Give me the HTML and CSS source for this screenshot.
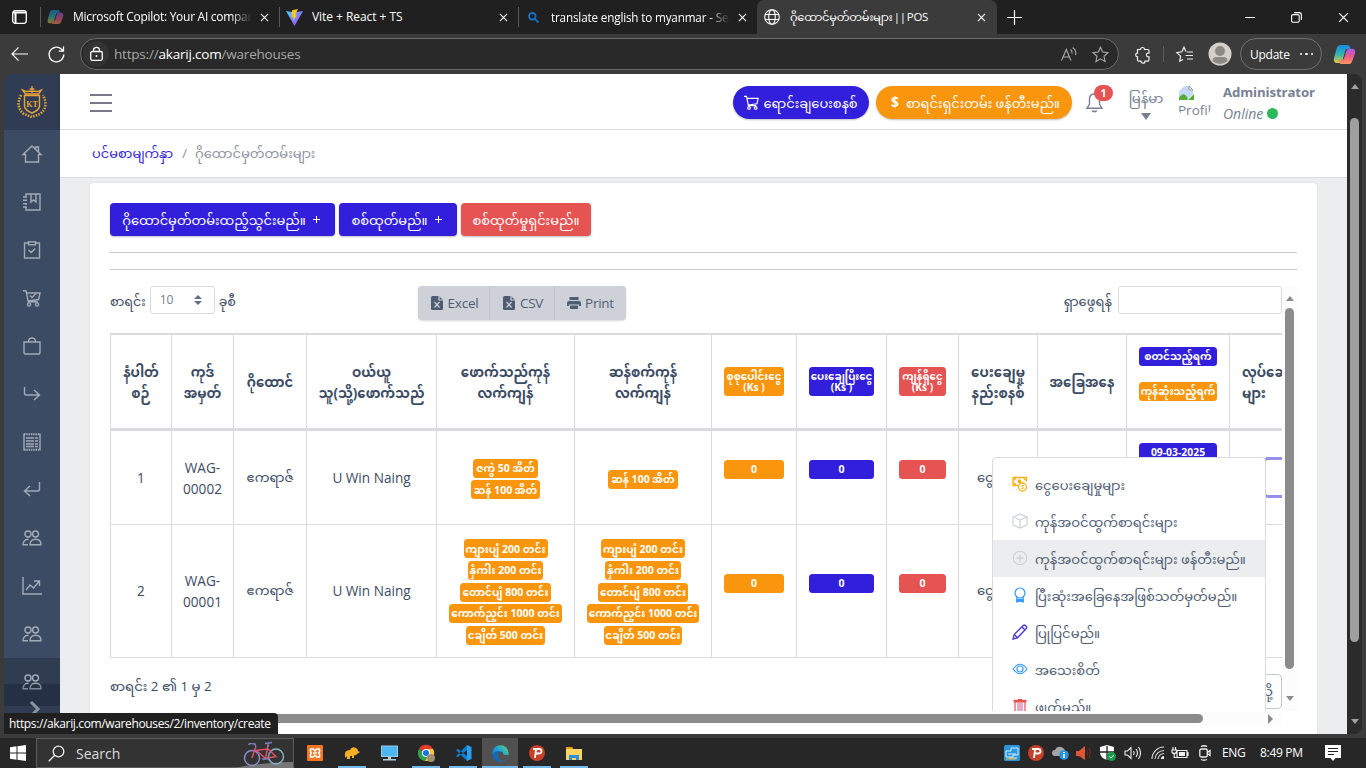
FILE: index.html
```html
<!DOCTYPE html>
<html lang="my">
<head>
<meta charset="utf-8">
<title>ဂိုထောင်မှတ်တမ်းများ || POS</title>
<link rel="stylesheet" href="styles.css">
</head>
<body>
<svg class="defs" aria-hidden="true">
  <defs>
    <linearGradient id="cpA" x1="0" y1="0" x2="0" y2="1"><stop offset="0" stop-color="#1b86e8"/><stop offset=".5" stop-color="#2bb6b0"/><stop offset="1" stop-color="#e8c83a"/></linearGradient>
    <linearGradient id="cpB" x1="0" y1="0" x2="0" y2="1"><stop offset="0" stop-color="#a05be8"/><stop offset=".5" stop-color="#f0578d"/><stop offset="1" stop-color="#fb9a5b"/></linearGradient>
    <linearGradient id="viteA" x1="0" y1="0" x2="1" y2="1"><stop offset="0" stop-color="#41d1ff"/><stop offset="1" stop-color="#bd34fe"/></linearGradient>
    <linearGradient id="edgeA" x1="0" y1="1" x2="1" y2="0"><stop offset="0" stop-color="#0c59a4"/><stop offset=".5" stop-color="#1b9de2"/><stop offset="1" stop-color="#5fd668"/></linearGradient>
  </defs>
  <symbol id="close" viewBox="0 0 10 10"><path d="M1 1l8 8M9 1L1 9" fill="none" stroke="currentColor" stroke-width="1.2"/></symbol>
  <symbol id="copilot" viewBox="0 0 24 22"><path d="M8 1h7q2 0 2.700 2l.6 2h-3q-2 0-2.600 2L10 17q-.8 3-3 3H4q-4 0-3-5L4 4q1-3 4-3z" fill="url(#cpA)"/><path d="M16 21H9q-2 0-2.500-2L6 17h3q2 0 2.600-2L14 7q.8-2 3-2h3q4 0 3 5l-3 8q-1 3-4 3z" fill="url(#cpB)"/></symbol>
  <symbol id="globe" viewBox="0 0 16 16"><g fill="none" stroke="currentColor" stroke-width="1.100"><circle cx="8" cy="8" r="7.300"/><ellipse cx="8" cy="8" rx="3.300" ry="7.300"/><path d="M1.300 5.500h13.400M1.300 10.500h13.400"/></g></symbol>
  <symbol id="people" viewBox="0 0 20 18"><g fill="none" stroke="currentColor" stroke-width="1.400"><circle cx="6" cy="5" r="3"/><circle cx="13.500" cy="5" r="3"/><path d="M6.500 10.200C3 10 1 12.500 1 15.800h5M8 15.800c0-3.500 2-5.600 5.500-5.600s5.500 2.100 5.500 5.600z"/></g></symbol>
  <symbol id="cart" viewBox="0 0 18 18"><g fill="none" stroke="currentColor" stroke-width="1.400"><path d="M0 1.700h3l2.300 11h9.500M3.500 4h13.500l-1.500 6.500L5 12"/><circle cx="6" cy="15.500" r="1.600"/><circle cx="14" cy="15.500" r="1.600"/></g></symbol>
  <symbol id="xls" viewBox="0 0 12 14"><path d="M1.500 0H8l4 4v8.500Q12 14 10.500 14h-9Q0 14 0 12.500v-11Q0 0 1.500 0z" fill="currentColor"/><path d="M3.500 6l5 5.500M8.500 6l-5 5.500M8 0v4h4" stroke="#ced2d8" stroke-width="1.200" fill="none"/></symbol>
</svg>

<header class="tabs">
  <div class="tab-menu"><svg width="15" height="14" viewBox="0 0 15 14"><rect x=".7" y=".7" width="13.600" height="12.600" rx="2.500" fill="none" stroke="#fff" stroke-width="1.300"/><path d="M1 2.500h13M3.500 3v10" stroke="#fff" stroke-width="2"/></svg></div>
  <div class="tab t1"><svg class="dim" width="17" height="16"><use href="#copilot"/></svg><span class="ttl fade">Microsoft Copilot: Your AI companion</span><svg class="x" width="9" height="9"><use href="#close"/></svg></div>
  <div class="tab t2"><svg width="17" height="17" viewBox="0 0 17 17"><path d="M0 2l8.500 15L17 2 8.500 3.500z" fill="url(#viteA)"/><path d="M12 0L6 1.200 5.500 8.500l2.200-.4L7 12l4-6-2 .3z" fill="#ffc51c"/></svg><span class="ttl">Vite + React + TS</span><svg class="x" width="9" height="9"><use href="#close"/></svg></div>
  <div class="tab t3"><svg width="11" height="11" viewBox="0 0 11 11"><g fill="none" stroke="#1672c9" stroke-width="1.800"><circle cx="4.300" cy="4.300" r="3.300"/><path d="M6.800 6.800L10.500 10.500"/></g></svg><span class="ttl fade">translate english to myanmar - Search</span><svg class="x" width="9" height="9"><use href="#close"/></svg></div>
  <div class="tab active"><svg width="16" height="16"><use href="#globe"/></svg><span class="ttl">ဂိုထောင်မှတ်တမ်းများ || POS</span><svg class="x" width="9" height="9"><use href="#close"/></svg></div>
  <svg class="plus" width="15" height="15" viewBox="0 0 15 15"><path d="M7.500 0v15M0 7.500h15" stroke="#fff" stroke-width="1.200"/></svg>
  <div class="winctl">
    <svg width="10" height="10" viewBox="0 0 10 10"><path d="M0 5.500h10" stroke="#fff"/></svg>
    <svg width="11" height="11" viewBox="0 0 11 11"><g fill="none" stroke="#fff" stroke-width="1.100"><rect x=".6" y="2.600" width="7.600" height="7.600" rx="1.500"/><path d="M3 .6h5q2.400 0 2.400 2.400v5"/></g></svg>
    <svg width="11" height="11"><use href="#close"/></svg>
  </div>
</header>

<nav class="toolbar">
  <svg class="back" width="17" height="14" viewBox="0 0 17 14"><path d="M7.500.5L1 7l6.500 6.500M1 7h16" fill="none" stroke="#fff" stroke-width="1.200"/></svg>
  <svg class="reload" width="17" height="17" viewBox="0 0 17 17"><path d="M15.800 8.500A7.400 7.400 0 1 1 13.300 3l1.700 2M15.500.5V5.200h-4.700" fill="none" stroke="#fff" stroke-width="1.300"/></svg>
  <div class="omni">
    <span class="lock"><svg width="13" height="14" viewBox="0 0 13 14"><g fill="none" stroke="#fff" stroke-width="1.300"><rect x=".7" y="4.500" width="11.600" height="8.800" rx="1.500"/><path d="M3.500 4.500V3.300a3 3 0 0 1 6 0v1.200"/></g><circle cx="6.500" cy="9" r="1" fill="#fff"/></svg></span>
    <span class="url">https://<b>akarij.com</b>/warehouses</span>
    <svg class="read" width="16" height="14" viewBox="0 0 16 14"><g fill="none" stroke="#aaa" stroke-width="1.100"><path d="M.5 13.500L5.300 2.500l4.700 11M2.200 10h6.200M9.500 2.500q2 1.500 1.500 4M11.700.5q4 3 2.800 7.500"/></g></svg>
    <svg width="17" height="17" viewBox="0 0 17 17"><path d="M8.500 1.200l2.200 4.900 5.300.6-4 3.600 1.100 5.300-4.600-2.700-4.600 2.700L5 10.300l-4-3.600 5.300-.6z" fill="none" stroke="#aaa" stroke-width="1.100"/></svg>
  </div>
  <svg class="ext" width="16" height="17" viewBox="0 0 16 17"><path d="M2.500 3.500h3a2 2 0 1 1 4 0h3.300q1.200 0 1.200 1.200v2.500h-.8a1.800 1.800 0 0 0 0 3.600h.8v3q0 1.400-1.200 1.400H10a2 2 0 0 1-4 0H3.700q-1.200 0-1.200-1.200v-3.200a1.800 1.800 0 0 1 0-3.600z" fill="none" stroke="#eee" stroke-width="1.200"/></svg>
  <i class="vsep"></i>
  <svg class="fav" width="17" height="16" viewBox="0 0 17 16"><path d="M10 5.800L8 1.200 5.900 5.800.9 6.600l3.700 3.500-.9 5L7 13.500M11 6h6M9.500 9.500H17M11 13h6" fill="none" stroke="#eee" stroke-width="1.200"/></svg>
  <svg class="avatar" width="24" height="24" viewBox="0 0 24 24"><circle cx="12" cy="12" r="11.500" fill="#d3d0cc"/><circle cx="12" cy="9" r="5" fill="#8c8985"/><path d="M4.500 19q0-4 4-4h7q4 0 4 4a11 11 0 0 1-15 0z" fill="#8c8985"/></svg>
  <div class="update">Update<span class="dots"><i></i><i></i><i></i></span></div>
  <svg class="cop" width="23" height="21"><use href="#copilot"/></svg>
</nav>

<div class="viewport">
  <aside class="side">
    <div class="brand"><svg width="30" height="34" viewBox="0 0 30 34"><g fill="none" stroke="#e8a33a"><path d="M7.500 10.500h15v11q-1 4-7.500 6.500-6.500-2.500-7.500-6.500z" stroke-width="1.400"/><path d="M15 1v7M12.500 4h5M5.500 5l3 4h13l3-4-4 1.500-5.500-.5-5.500.5z" stroke-width="1.300"/><path d="M4 10q-6 12 3 19l8 3 8-3q9-7 3-19" stroke-width="2.600" stroke-dasharray="1.500 1.300"/></g><text x="15" y="21.500" text-anchor="middle" class="kt">KT</text></svg></div>
    <div class="item"><svg width="20" height="18" viewBox="0 0 20 18"><path d="M1 9.500L10 1l9 8.500H16.500V17h-13V9.500zM13.500 4V2h3v5" fill="none" stroke="currentColor" stroke-width="1.400"/></svg></div>
    <div class="item"><svg width="18" height="18" viewBox="0 0 18 18"><g fill="none" stroke="currentColor" stroke-width="1.400"><path d="M3 4V1h14v16H3v-3M8 1v8l2.500-2L13 9V1M3 6.500v1.500M3 10.500V12M0 4h4M0 7.300h4M0 10.600h4M0 14h4"/></g></svg></div>
    <div class="item"><svg width="18" height="18" viewBox="0 0 18 18"><g fill="none" stroke="currentColor" stroke-width="1.400"><path d="M5 2H1.500v15h15V2H13M5.500 9l2.700 2.500 4-4"/><rect x="5.500" y=".8" width="7" height="3"/></g></svg></div>
    <div class="item"><svg width="18" height="18" viewBox="0 0 18 18"><use href="#cart"/><path d="M7 6.500l2 2 4-4" fill="none" stroke="currentColor" stroke-width="1.300"/></svg></div>
    <div class="item"><svg width="18" height="18" viewBox="0 0 18 18"><path d="M1 5h16v10.500q0 1.500-1.500 1.500h-13Q1 17 1 15.500zM5.500 5q0-4 3.500-4t3.500 4" fill="none" stroke="currentColor" stroke-width="1.400"/></svg></div>
    <div class="item"><svg width="18" height="18" viewBox="0 0 18 18"><path d="M1.500 2v6q0 2 2 2H16M11 5l5.500 5-5.500 5" fill="none" stroke="currentColor" stroke-width="1.400"/></svg></div>
    <div class="item"><svg width="18" height="18" viewBox="0 0 18 18"><g fill="none" stroke="currentColor"><path d="M1 .5V17.500M17 .5V17.500" stroke-width="1.400"/><path d="M1 1.300h16M1 16.700h16" stroke-width="2" stroke-dasharray="1.500 .8"/><path d="M3 5h8M3 8h8M3 11h8M3 13.500h8M12 5h3M12 8h3M12 11h3M12 13.500h3" stroke-width="1.700"/></g></svg></div>
    <div class="item"><svg width="18" height="18" viewBox="0 0 18 18"><path d="M16.500 1v7q0 2-2 2H2M7 5l-5.500 5L7 15" fill="none" stroke="currentColor" stroke-width="1.400"/></svg></div>
    <div class="item"><svg width="20" height="18"><use href="#people"/></svg></div>
    <div class="item"><svg width="20" height="18" viewBox="0 0 20 18"><path d="M1 0v17h19M4 13l4-5 3.500 3L17 4.500M12 4h5.500v5" fill="none" stroke="currentColor" stroke-width="1.400"/></svg></div>
    <div class="item"><svg width="20" height="18"><use href="#people"/></svg></div>
    <div class="item on"><svg width="20" height="18"><use href="#people"/></svg></div>
    <div class="minimizer"><svg width="12" height="16" viewBox="0 0 12 16"><path d="M2 1l7 7-7 7" fill="none" stroke="#8a93a2" stroke-width="3"/></svg></div>
  </aside>

  <main class="main">
    <div class="head">
      <div class="burger"><i></i><i></i><i></i></div>
      <div class="pill blue"><svg width="15" height="15"><use href="#cart"/></svg><span>ရောင်းချပေးစနစ်</span></div>
      <div class="pill orange"><b>$</b><span>စာရင်းရှင်းတမ်း ဖန်တီးမည်။</span></div>
      <div class="bell"><svg width="17" height="20" viewBox="0 0 17 20"><path d="M8.500 1C5 1 3.500 3.500 3.500 6v5L1 15.300h15L13.500 11V6c0-2.500-1.500-5-5-5z" fill="none" stroke="#768192" stroke-width="1.400"/><path d="M5.500 17.500h6q-.5 2-3 2t-3-2z" fill="#768192"/></svg><span class="count">1</span></div>
      <div class="lang"><span>မြန်မာ</span><i></i></div>
      <div class="broken"><svg width="17" height="16" viewBox="0 0 17 16"><path d="M1 1h10l4 4v4l-6 6H1z" fill="#c5d8f5"/><path d="M1 13q5-8 9 1l-1 1H1z" fill="#53ad32"/><path d="M16 9v6H10z" fill="#53ad32"/><path d="M11 1v4h4M11 1l4 4" stroke="#999" fill="#fff"/></svg><span>Profil</span></div>
      <div class="who"><b>Administrator</b><em>Online <i></i></em></div>
    </div>
    <div class="crumb"><a>ပင်မစာမျက်နှာ</a><span class="slash">/</span><span>ဂိုထောင်မှတ်တမ်းများ</span></div>

    <section class="card">
      <div class="actions">
        <div class="btn b1"><span>ဂိုထောင်မှတ်တမ်းထည့်သွင်းမည်။</span><i class="add"></i></div>
        <div class="btn b2"><span>စစ်ထုတ်မည်။</span><i class="add"></i></div>
        <div class="btn b3"><span>စစ်ထုတ်မှုရှင်းမည်။</span></div>
      </div>
      <hr><hr>
      <div class="scroller">
        <div class="pane">
          <div class="controls">
            <label class="len"><span>စာရင်း</span><span class="select">10<svg width="8" height="10" viewBox="0 0 8 10"><path d="M4 0l4 4H0zM4 10L0 6h8z" fill="#636f83"/></svg></span><span>ခုစီ</span></label>
            <div class="exports"><span class="e1"><svg width="12" height="14"><use href="#xls"/></svg>Excel</span><span class="e2"><svg width="12" height="14"><use href="#xls"/></svg>CSV</span><span class="e3"><svg width="14" height="12" viewBox="0 0 14 12"><path d="M2.500 0h9v4h-9zM0 6q0-2 2-2h10q2 0 2 2v3h-2V7.500H2V9H0zM3 8.500h8V12H3z" fill="currentColor"/><path d="M2.500 3.500h9" stroke="#ced2d8"/></svg>Print</span></div>
            <label class="find"><span>ရှာဖွေရန်</span><span class="input"></span></label>
          </div>
          <div class="grid">
            <div class="row th">
              <div><p>နံပါတ်</p><p>စဉ်</p></div>
              <div><p>ကုဒ်</p><p>အမှတ်</p></div>
              <div><p>ဂိုထောင်</p></div>
              <div><p>ဝယ်ယူ</p><p>သူ(သို့)ဖောက်သည်</p></div>
              <div><p>ဖောက်သည်ကုန်</p><p>လက်ကျန်</p></div>
              <div><p>ဆန်စက်ကုန်</p><p>လက်ကျန်</p></div>
              <div><span class="badge two"><s>စုစုပေါင်းငွေ</s><s>(Ks )</s></span></div>
              <div><span class="badge two blue"><s>ပေးချေပြီးငွေ</s><s>(Ks )</s></span></div>
              <div><span class="badge two red"><s>ကျန်ရှိငွေ</s><s>(Ks )</s></span></div>
              <div><p>ပေးချေမှု</p><p>နည်းစနစ်</p></div>
              <div><p>အခြေအနေ</p></div>
              <div class="dates"><span class="badge wide blue">စတင်သည့်ရက်</span><span class="badge wide">ကုန်ဆုံးသည့်ရက်</span></div>
              <div class="ops"><p>လုပ်ဆောင်ချက်</p><p>များ</p></div>
            </div>
            <div class="row r1">
              <div>1</div>
              <div><p>WAG-</p><p>00002</p></div>
              <div><p class="my">ဧကရာဇ်</p></div>
              <div>U Win Naing</div>
              <div class="stack"><span class="badge" style="width:65px">ဇကွဲ 50 အိတ်</span><span class="badge" style="width:69px">ဆန် 100 အိတ်</span></div>
              <div class="stack"><span class="badge" style="width:70px">ဆန် 100 အိတ်</span></div>
              <div class="num"><span class="badge">0</span></div>
              <div class="num"><span class="badge blue">0</span></div>
              <div class="num"><span class="badge red">0</span></div>
              <div class="pay"><p class="my">ငွေသား</p></div>
              <div></div>
              <div class="dates"><span class="badge wide blue">09-03-2025</span></div>
              <div class="ops"><span class="focus"></span></div>
            </div>
            <div class="row r2">
              <div>2</div>
              <div><p>WAG-</p><p>00001</p></div>
              <div><p class="my">ဧကရာဇ်</p></div>
              <div>U Win Naing</div>
              <div class="stack"><span class="badge" style="width:84px">ကျားပျံ 200 တင်း</span><span class="badge" style="width:75px">နှံကါး 200 တင်း</span><span class="badge" style="width:91px">တောင်ပျံ 800 တင်း</span><span class="badge" style="width:113px">ကောက်ညှင်း 1000 တင်း</span><span class="badge" style="width:79px">ငချိတ် 500 တင်း</span></div>
              <div class="stack"><span class="badge" style="width:84px">ကျားပျံ 200 တင်း</span><span class="badge" style="width:76px">နှံကါး 200 တင်း</span><span class="badge" style="width:90px">တောင်ပျံ 800 တင်း</span><span class="badge" style="width:112px">ကောက်ညှင်း 1000 တင်း</span><span class="badge" style="width:78px">ငချိတ် 500 တင်း</span></div>
              <div class="num"><span class="badge">0</span></div>
              <div class="num"><span class="badge blue">0</span></div>
              <div class="num"><span class="badge red">0</span></div>
              <div class="pay"><p class="my">ငွေသား</p></div>
              <div></div><div></div><div class="ops"></div>
            </div>
          </div>
          <div class="foot"><span>စာရင်း 2 ၏ 1 မှ 2</span><span class="pager">ရှေ့သို့</span></div>
          <div class="menu">
            <div><svg width="16" height="16" viewBox="0 0 16 16"><g fill="none" stroke="#f9b115" stroke-width="1.300"><path d="M6 9.500H1V1.500h13.500v4"/><path d="M1 4q2.500 0 2.500-2.500M14.500 4Q12 4 12 1.500M1 7q2.500 0 2.500 2.500"/><circle cx="7.500" cy="5.300" r="1.300" fill="#f9b115"/><circle cx="10.500" cy="11" r="4"/><path d="M12 9.500h-2q-1 1 .5 1.500t.5 1.500H9.300" stroke-width="1"/></g></svg><span>ငွေပေးချေမှုများ</span></div>
            <div><svg width="16" height="16" viewBox="0 0 16 16"><path d="M1 4l7-3 7 3v8l-7 3-7-3zM1 4l7 3 7-3M8 7v8" fill="none" stroke="#ced2d8" stroke-width="1.200"/></svg><span>ကုန်အဝင်ထွက်စာရင်းများ</span></div>
            <div class="hover"><svg width="16" height="16" viewBox="0 0 16 16"><g fill="none" stroke="#ced2d8"><circle cx="8" cy="8" r="6.700" stroke-width="1.100"/><path d="M8 4.500v7M4.500 8h7" stroke-width="1.500"/></g></svg><span>ကုန်အဝင်ထွက်စာရင်းများ ဖန်တီးမည်။</span></div>
            <div><svg width="16" height="16" viewBox="0 0 16 16"><g fill="none" stroke="#39f" stroke-width="1.200"><circle cx="8" cy="6" r="5"/><path d="M4.800 10v5.300M11.200 10v5.300"/><path d="M5 12.500h6V15l-3-1-3 1z" fill="#39f"/></g></svg><span>ပြီးဆုံးအခြေနေအဖြစ်သတ်မှတ်မည်။</span></div>
            <div><svg width="16" height="16" viewBox="0 0 16 16"><path d="M1 15l1.200-4.500L11.300 1.500q1-1 2 0l1 1q1 1 0 2L5.500 13.800zM2.200 10.500l3.300 3.300M10 3l3 3" fill="none" stroke="#4638d2" stroke-width="1.300"/></svg><span>ပြုပြင်မည်။</span></div>
            <div><svg width="16" height="16" viewBox="0 0 16 16"><g fill="none" stroke="#39f" stroke-width="1.200"><path d="M1 8q7-9.500 14 0-7 9.500-14 0z"/><circle cx="8" cy="8" r="3"/></g></svg><span>အသေးစိတ်</span></div>
            <div><svg width="16" height="16" viewBox="0 0 16 16"><g fill="none" stroke="#e55353" stroke-width="1.200"><path d="M3 4h10v11H3zM6 1.500h4"/><path d="M6 5v9M8 5v9M10 5v9" stroke="#dc6fa0"/><path d="M1.500 3h13" stroke-width="2.400"/></g></svg><span>ဖျက်မည်။</span></div>
          </div>
        </div>
        <div class="vbar"><i class="up"></i><b></b><i class="dn"></i></div>
        <div class="hbar"><b></b><i></i></div>
      </div>
    </section>
  </main>
  <div class="pagebar"><i class="up"></i><b></b><i class="dn"></i></div>
  <div class="status">https://akarij.com/warehouses/2/inventory/create</div>
</div>

<footer class="taskbar">
  <div class="win"><svg width="16" height="16" viewBox="0 0 16 16"><path d="M0 2.200L6.500 1.300V7.500H0zM7.500 1.200L16 0v7.500H7.500zM0 8.500h6.500v6.200L0 13.800zM7.500 8.500H16V16l-8.500-1.200z" fill="#fff"/></svg></div>
  <div class="search"><svg width="17" height="17" viewBox="0 0 17 17"><g fill="none" stroke="#eee" stroke-width="1.300"><circle cx="10.500" cy="6.500" r="5.300"/><path d="M6.700 10.300L.7 16.300"/></g></svg><span>Search</span>
    <svg class="bike" width="58" height="28" viewBox="0 0 58 28"><path d="M0 28q20-5 58-6v6z" fill="#777"/><g fill="none" stroke-width="1.400"><circle cx="17" cy="18" r="7.500" stroke="#8b8fd0"/><circle cx="41" cy="16.500" r="7.500" stroke="#8cb4c4"/><path d="M17 18l3.500-10.500M20 10.500l13-1.500 8 7.500-10.500 2L21 10M30.500 18.500L33 5" stroke="#e0526c"/><path d="M14 5q-1-2 6-1l1 3.500M30 3.500l7-1M33 7V3M27 19h7" stroke="#7b7fc4"/></g></svg></div>
  <div class="app"><svg width="16" height="16" viewBox="0 0 16 16"><rect width="16" height="16" rx="1" fill="#f37623"/><path d="M3.500 4h2.800L8 6l1.700-2h2.800v3l-1 1 1 1v3H9.700L8 10l-1.700 2H3.500V9l1-1-1-1zM6 8h4" fill="none" stroke="#fff" stroke-width="1.600" stroke-linejoin="round"/></svg></div>
  <div class="app run"><svg width="16" height="14" viewBox="0 0 16 14"><path d="M1 10q-1-6 5-6Q8 0 12 2q2 1 2 3l2 1-3 2q-1 2-3 1v3H8v-2H6v3H3v-3l-2 2z" fill="#fbb024"/></svg></div>
  <div class="app"><svg width="17" height="16" viewBox="0 0 17 16"><rect x=".5" y="1" width="16" height="10.500" fill="#4db7f5" stroke="#9cd"/><path d="M7 12h3v2H7zM2 14h13v1.500H2z" fill="#bcd"/></svg></div>
  <div class="app run"><svg width="17" height="17" viewBox="0 0 17 17"><path d="M1 4a8 8 0 0 1 14 0L8 8z" fill="#e33b2e"/><path d="M1 4a8 8 0 0 0 6 12l3-6z" fill="#2ba24c"/><path d="M15 4a8 8 0 0 1-8 12l4-8-2-4z" fill="#fcc934"/><circle cx="8" cy="8" r="4" fill="#fff"/><circle cx="8" cy="8" r="3" fill="#1a73e8"/><circle cx="13" cy="13" r="4" fill="#a09070"/></svg></div>
  <div class="app run"><svg width="17" height="16" viewBox="0 0 17 16"><path d="M12 0l4.500 2v12L12 16z" fill="#2a9ff0"/><path d="M12 0v5L2.700 12.200 1 11zM12 16v-5L2.700 3.800 1 5z" fill="#0d7fd0"/></svg></div>
  <div class="app run cur"><svg width="17" height="17" viewBox="0 0 17 17"><circle cx="8.500" cy="8.500" r="8.300" fill="url(#edgeA)"/><path d="M6 12q-1.500-5 3-5.500 2 0 2 2 0 1.500 2.500 1.500 3 0 3-1.500Q17 14 11 16q-4-1-5-4z" fill="#505050"/><path d="M1 9q3-4 7.500-2.500Q4 8 6 12q1 3 5 4Q2 18 .5 10z" fill="#1467b3"/></svg></div>
  <div class="app run"><svg width="16" height="16" viewBox="0 0 16 16"><circle cx="8" cy="8" r="8" fill="#c8402a"/><path d="M4 4h6q2.500 0 2.500 2.300T9.500 8.500H7M7 4.500L6 13" fill="none" stroke="#fff" stroke-width="1.800"/></svg></div>
  <div class="app run"><svg width="16" height="15" viewBox="0 0 16 15"><path d="M0 1h6l1 2h9v11H0z" fill="#fcd462"/><path d="M0 1h6l1 2H0z" fill="#e6a010"/><path d="M3 14V9h10v5h-3v-2H6v2z" fill="#2f8de0"/></svg></div>
  <div class="tray">
    <svg width="16" height="16" viewBox="0 0 16 16"><rect width="16" height="16" rx="1.500" fill="#2a94dc"/><path d="M2 6h5V3h7v7H9v2H2zM4 9h8M5 13h8" fill="none" stroke="#d5eefc"/><path d="M2 14h10" stroke="#f2b82e"/></svg>
    <svg class="i2" width="16" height="16" viewBox="0 0 16 16"><circle cx="8" cy="8" r="8" fill="#c8402a"/><path d="M4 4h6q2.500 0 2.500 2.300T9.500 8.500H7M7 4.500L6 13" fill="none" stroke="#fff" stroke-width="1.800"/></svg>
    <svg class="i3" width="17" height="14" viewBox="0 0 17 14"><path d="M3 10a3 3 0 0 1 0-6q2-4 6-3 4 1 4 5v4z" fill="#a5a5a5"/><circle cx="12" cy="9" r="4.800" fill="#2794df"/><path d="M12 8v4M12 6v1" stroke="#fff" stroke-width="1.500"/></svg>
    <svg class="i4" width="15" height="14" viewBox="0 0 15 14"><path d="M0 5h3l6-5v14L3 10H0z" fill="#dd5736"/><path d="M11 4q2 3 0 6M13 2q3 5 0 10" stroke="#6d2a1c" fill="none"/></svg>
    <svg class="i5" width="16" height="16" viewBox="0 0 16 16"><path d="M7 0l7 2v5q0 6-7 8-7-2-7-8V2z" fill="#fff"/><path d="M7 1v14M0 7h14" stroke="#222" stroke-width="1.300"/><circle cx="11.500" cy="11.500" r="4.500" fill="#169b48"/><path d="M9.500 11.500l1.500 1.500 3-3" stroke="#fff" fill="none"/></svg>
    <svg class="i6" width="17" height="14" viewBox="0 0 17 14"><path d="M1 5h2.500L7 1.500v11L3.500 9H1zM9.500 5q1.500 2 0 4M12 3q3 4 0 8M14.500 1q4 6 0 12" fill="none" stroke="#eee" stroke-width="1.100"/></svg>
    <svg class="i7" width="14" height="14" viewBox="0 0 14 14"><g fill="none" stroke="#ddd" stroke-width="1.100"><path d="M1 13A12 12 0 0 1 13 1M4 13a9 9 0 0 1 9-8.500M7 13a6 6 0 0 1 6-5.500"/></g><path d="M10 13a3 3 0 0 1 3-3v3z" fill="#eee"/></svg>
    <svg class="i8" width="17" height="12" viewBox="0 0 17 12"><path d="M5 3.500h10v7H5zM16 5v4M0 3h4.500v2.500q-2.200 2-4.500 0zM1 0v3M3.500 0v3M2.200 6v4.500H5" fill="none" stroke="#eee" stroke-width="1.200"/><path d="M7 5h6v4H7z" fill="#eee"/></svg>
    <svg class="i9" width="12" height="16" viewBox="0 0 12 16"><g fill="none" stroke="#eee" stroke-width="1.300"><rect x=".8" y="4" width="7.500" height="8" rx="1.500"/><path d="M8.300 7.500L11 5.500v5L8.300 8.500M2 1.500q3-1.500 6 0M2 14.500q3 1.500 6 0"/></g></svg>
    <span class="eng">ENG</span><span class="clock">8:49 PM</span>
    <svg class="note" width="16" height="16" viewBox="0 0 16 16"><path d="M0 0h16v13h-5.500L8 16l-2.500-3H0z" fill="#fff"/><path d="M3 3.500h10M3 6.500h10M3 9.500h6" stroke="#222"/></svg>
  </div>
</footer>
</body>
</html>
```
FILE: styles.css
```css
* { box-sizing: border-box; }
body { margin: 0; width: 1366px; height: 768px; overflow: hidden; display: flex; flex-direction: column; background: #3b3b3b; font-family: "Open Sans", "Noto Sans", "Noto Sans Myanmar", "Myanmar Text", Padauk, sans-serif; font-size: 13.100px; color: #3c4b64; }
.defs { position: absolute; width: 0; height: 0; }
svg { display: block; flex: none; overflow: visible; }
p { margin: 0; }
span, p, b { white-space: nowrap; }

.tabs { height: 34px; flex: none; background: #202020; display: flex; align-items: center; color: #fff; font-size: 12px; letter-spacing: -.2px; }
.tab-menu { width: 40px; padding-left: 12px; }
.tab { height: 34px; display: flex; align-items: center; }
.t1, .t2, .t3 { border-left: 1px solid #5a5a5a; height: 20px; width: 239px; padding-left: 6px; }
.t3 { padding-left: 9px; }
.ttl { margin-left: 9px; flex: 1; overflow: hidden; line-height: 30px; }
.fade { margin-right: 8px; -webkit-mask-image: linear-gradient(90deg, #000 88%, transparent); mask-image: linear-gradient(90deg, #000 88%, transparent); }
.t1 .ttl { letter-spacing: -.28px; }
.t2 .ttl { letter-spacing: -.05px; }
.t3 .ttl { margin-left: 12px; font-size: 11.700px; letter-spacing: -.16px; margin-top: -1px; }
.x { margin-right: 10px; }
.dim { opacity: .55; }
.active { width: 240px; padding-left: 7px; background: #3b3b3b; border-radius: 7px 7px 0 0; }
.active .ttl { font-size: 11.400px; letter-spacing: -.28px; word-spacing: -1.500px; margin-left: 10px; }
.active .x { margin-right: 11px; }
.plus { margin-left: 10px; }
.winctl { margin-left: auto; display: flex; align-items: center; gap: 36px; padding-right: 17px; }

.toolbar { height: 40px; flex: none; display: flex; align-items: center; }
.back { margin-left: 11px; }
.reload { margin-left: 20px; }
.omni { width: 1039px; height: 32px; margin-left: 15px; border: 1px solid #6b6b6b; border-radius: 16px; background: #292929; display: flex; align-items: center; padding: 0 9px 0 2px; }
.lock { width: 26px; height: 26px; border-radius: 13px; background: #333; display: flex; align-items: center; justify-content: center; }
.url { margin-left: 5px; flex: 1; color: #a8a8a8; font-size: 13.500px; letter-spacing: -.2px; }
.url b { font-weight: 400; color: #fff; }
.read { margin-right: 15px; }
.ext { margin-left: 16px; }
.vsep { width: 1px; height: 16px; background: #5a5a5a; margin: 0 12px; }
.avatar { margin-left: 15px; }
.update { width: 82px; height: 32px; margin-left: 8px; border: 1px solid #707070; border-radius: 16px; color: #fff; font-size: 12px; letter-spacing: -.25px; display: flex; align-items: center; padding-left: 9px; }
.dots { display: flex; gap: 3px; margin-left: 10px; }
.dots i { width: 2.500px; height: 2.500px; border-radius: 50%; background: #fff; }
.cop { margin-left: 11px; }

.viewport { height: 660px; flex: none; margin-left: 4px; width: 1358px; display: flex; position: relative; overflow: hidden; border-radius: 8px 8px 0 0; }
.side { width: 56px; flex: none; background: #3c4b64; color: #a3abb7; position: relative; }
.brand { height: 56px; background: #303c54; display: flex; align-items: center; justify-content: center; }
.kt { font: bold 8px "Liberation Serif", serif; fill: #e8a33a; }
.item { height: 48px; display: flex; align-items: center; justify-content: center; }
.on { background: #303c50; }
.minimizer { position: absolute; left: 0; right: 0; top: 610px; height: 50px; background: rgba(0, 0, 21, .2); display: flex; justify-content: center; padding: 17px 0 0 6px; }

.main { width: 1287px; flex: none; background: #ebedef; display: flex; flex-direction: column; }
.head { height: 56px; flex: none; background: #fff; border-bottom: 1px solid #d8dbe0; display: flex; align-items: center; padding-left: 30px; }
.burger { width: 22px; display: grid; gap: 6px; margin-right: 621px; padding-top: 3px; }
.burger i { height: 2px; background: #7a7888; }
.pill { height: 33px; border-radius: 17px; color: #fff; display: flex; align-items: center; justify-content: center; gap: 4px; box-shadow: 0 1px 2px rgba(0, 0, 21, .25); margin-top: 1px; line-height: 30px; font-size: 13px; }
.pill span { margin-top: 2px; }
.blue { background: #321fdb; }
.orange { background: #f9960d; }
.pill.blue { width: 136px; }
.pill.orange { width: 196px; margin-left: 7px; gap: 7px; padding-left: 3px; }
.pill b { font-size: 14px; }
.bell { margin: 2px 0 0 14px; width: 42px; position: relative; }
.count { position: absolute; left: 8px; top: -8px; width: 19px; height: 16px; border-radius: 8px; background: #e55353; color: #fff; font-size: 10.500px; font-weight: 700; line-height: 16px; text-align: center; }
.lang { width: 36px; display: flex; flex-direction: column; align-items: center; color: #768192; height: 40px; font-size: 13.300px; }
.lang span { line-height: 32px; margin-bottom: -1px; }
.lang i { border: 5.500px solid transparent; border-top: 7px solid #768192; border-bottom: 0; }
.broken { width: 33px; height: 33px; overflow: hidden; border-radius: 12px; margin-left: 14px; color: #768192; font-size: 13.500px; }
.broken span { display: block; line-height: 15px; margin-top: 2px; }
.who { margin-left: 12px; color: #768192; line-height: 21px; margin-top: 2px; }
.who b { display: block; font-size: 13.200px; letter-spacing: -.1px; }
.who em { display: flex; align-items: center; gap: 4px; font-size: 14px; }
.who i { width: 11px; height: 11px; border-radius: 6px; background: #2eb85c; }

.crumb { height: 48px; flex: none; background: #fff; border-bottom: 1px solid #d8dbe0; display: flex; align-items: center; padding: 0 0 1px 32px; line-height: 30px; color: #8a93a2; }
.crumb a { color: #321fdb; font-size: 12.950px; }
.slash { margin: 0 8px 0 9px; }

.card { margin: 5px 30px 0; flex: 1; background: #fff; border-radius: 4px 4px 0 0; padding: 20px 20px 0; min-height: 0; box-shadow: 0 0 3px rgba(0, 0, 21, .08); }
.actions { display: flex; gap: 4px; height: 33px; }
.btn { background: #321fdb; color: #fff; border-radius: 4px; display: flex; align-items: center; justify-content: center; gap: 7px; box-shadow: 0 1px 2px rgba(0, 0, 21, .25); line-height: 30px; font-size: 13.050px; }
.btn span { margin-top: 1px; }
.b1 { width: 225px; padding-right: 3px; } .b2 { width: 118px; padding-right: 3px; } .b3 { width: 130px; background: #e55353; }
.add { width: 7px; height: 7px; background: linear-gradient(#fff, #fff) center / 7px 1px no-repeat, linear-gradient(#fff, #fff) center / 1px 7px no-repeat; }
hr { border: 0; height: 1px; background: #c9c9c9; margin: 16px 0; }

.scroller { width: 1187px; display: grid; grid-template-columns: 1172px 15px; grid-template-rows: 425px 15px; margin-top: 16px; }
.pane { position: relative; overflow: hidden; height: 425px; }
.controls { height: 47px; display: flex; align-items: flex-start; }
.len { display: flex; align-items: center; height: 28px; width: 308px; gap: 4px; font-size: 12.700px; line-height: 30px; }
.len > span:not(.select) { margin-top: 2px; }
.select { width: 65px; height: 28px; border: 1px solid #d8dbe0; border-radius: 3px; display: flex; align-items: center; justify-content: space-between; padding: 0 12px 0 9px; color: #768192; font-size: 12px; }
.exports { width: 208px; height: 34px; background: #ced2d8; border-radius: 4px; display: flex; box-shadow: 0 1px 2px rgba(0, 0, 21, .15); color: #4f5d73; }
.exports span { display: flex; align-items: center; justify-content: center; gap: 5px; border-right: 1px solid #c0c5cd; font-size: 13.500px; letter-spacing: -.25px; padding-left: 2px; }
.e1 { width: 72px; } .e2 { width: 65px; } .exports .e3 { flex: 1; border: 0; gap: 4px; padding: 0; }
.find { margin-left: auto; display: flex; align-items: center; gap: 6px; height: 28px; line-height: 30px; }
.find span:first-child { margin-top: 2px; }
.input { width: 164px; height: 28px; border: 1px solid #d8dbe0; border-radius: 3px; }

.grid { width: 1240px; border-left: 1px solid #d8dbe0; }
.row { display: grid; grid-template-columns: 61px 62px 73px 130px 138px 137px 85px 90px 72px 79px 89px 103px 120px; border-bottom: 1px solid #d8dbe0; font-size: 13.600px; }
.row > div { border-right: 1px solid #d8dbe0; display: flex; flex-direction: column; align-items: center; justify-content: center; line-height: 21px; min-width: 0; }
.row .my { font-size: 13.100px; }
.row.th { height: 98px; border-top: 2px solid #d8dbe0; border-bottom: 3px solid #d8dbe0; font-weight: 700; font-size: 13.300px; }
.th p { position: relative; top: 1px; }
.r1 { height: 94px; }
.row.r2 { height: 133px; }
.row.r2 > div { padding-bottom: 1px; }
.badge { display: flex; align-items: center; justify-content: center; height: 19px; flex: none; border-radius: 3.500px; background: #f9960d; color: #fff; font-size: 10.500px; font-weight: 700; line-height: 10.500px; overflow: hidden; }
.badge.blue { background: #321fdb; } .badge.red { background: #e55353; }
.badge s { text-decoration: none; white-space: nowrap; }
.two { flex-direction: column; height: 29px; align-self: stretch; margin: 0 12px; font-size: 10.200px; }
.num .badge { align-self: stretch; margin: 0 12px; }
.row .num { justify-content: flex-start; padding-top: 29px; }
.r2 .num { padding-top: 49px; }
.row .dates { justify-content: flex-start; padding-top: 12px; gap: 16px; }
.wide { width: 78px; font-size: 10.400px; }
.row .stack { gap: 2.600px; padding-top: 3px; }
.row .pay { align-items: flex-start; padding-left: 18px; }
.row .ops { align-items: flex-start; padding-left: 12px; }
.focus { width: 60px; height: 41px; border: 3px solid #988fed; border-radius: 5px; margin: 0 0 0 21px; }
.foot { height: 60px; display: flex; justify-content: space-between; padding-top: 14px; line-height: 28px; font-size: 13.300px; }
.pager { width: 54px; height: 35px; border: 1px solid #c4c9d0; border-radius: 0 4px 4px 0; padding: 2px 9px; text-align: right; margin-top: 2px; color: #4f5d73; }

.menu { position: absolute; left: 882px; top: 171px; width: 274px; height: 280px; background: #fff; border: 1px solid #d8dbe0; border-radius: 4px; padding-top: 8px; color: #4f5d73; }
.menu > div { height: 37px; display: flex; align-items: center; padding-left: 19px; gap: 7px; line-height: 30px; }
.menu svg { margin-top: -2px; }
.menu span { margin-top: 1px; }
.menu .hover { background: #ebedef; }

.vbar, .hbar { background: #fcfcfc; display: flex; align-items: center; }
.vbar { flex-direction: column; padding: 10px 0; }
.vbar b { width: 9px; height: 361px; border-radius: 5px; background: #8b8b8b; margin-top: 7px; margin-bottom: auto; }
.up, .dn { border: 4.500px solid transparent; }
.up { border-bottom: 5px solid #8b8b8b; border-top: 0; }
.dn { border-top: 5px solid #8b8b8b; border-bottom: 0; }
.hbar b { width: 1079px; margin-left: 14px; height: 9px; border-radius: 5px; background: #8b8b8b; }
.hbar i { border: 5px solid transparent; border-left: 5px solid #8b8b8b; border-right: 0; margin-left: auto; margin-right: 9px; }

.pagebar { width: 15px; background: #2b2b2b; display: flex; flex-direction: column; align-items: center; padding: 10px 0; border-bottom-right-radius: 8px; }
.pagebar .up { border-bottom-color: #a0a0a0; } .pagebar .dn { border-top-color: #a0a0a0; margin-top: auto; }
.pagebar b { width: 9px; height: 524px; margin-top: 29px; border-radius: 5px; background: #9f9f9f; }
.status { position: absolute; left: 0; bottom: 0; width: 274px; height: 21px; background: #202020; color: #fff; font-size: 12px; line-height: 21px; padding-left: 5px; letter-spacing: -.36px; white-space: nowrap; border-top-right-radius: 4px; }

.taskbar { height: 30px; flex: none; margin-top: 4px; background: #272727; display: flex; color: #fff; }
.win { width: 36px; padding: 7px 0 0 10px; }
.search { width: 258px; border: 1px solid #5d5d5d; background: #333; display: flex; align-items: center; padding-left: 11px; color: #ddd; font-size: 14px; }
.search span { margin-left: 11px; flex: 1; }
.bike { margin-top: 2px; }
.app { width: 36px; display: flex; align-items: center; justify-content: center; margin-left: 1px; }
.app:nth-of-type(3) { margin-left: 3px; }
.run { background: linear-gradient(#76b9ed, #76b9ed) center bottom / 28px 2px no-repeat; }
.cur { background: linear-gradient(#76b9ed, #76b9ed) center bottom / 36px 2px no-repeat #505050; }
.tray { margin-left: auto; display: flex; align-items: center; width: 362px; font-size: 12px; letter-spacing: -.3px; }
.tray span { margin-top: -1px; }
.i2 { margin-left: 8px; } .i3 { margin-left: 8px; } .i4 { margin-left: 7px; } .i5 { margin-left: 9px; } .i6 { margin-left: 8px; } .i7 { margin-left: 10px; } .i8 { margin-left: 7px; } .i9 { margin-left: 10px; }
.eng { margin-left: 11px; width: 24px; } .clock { margin-left: 14px; width: 43px; } .note { margin-left: 22px; }
```
